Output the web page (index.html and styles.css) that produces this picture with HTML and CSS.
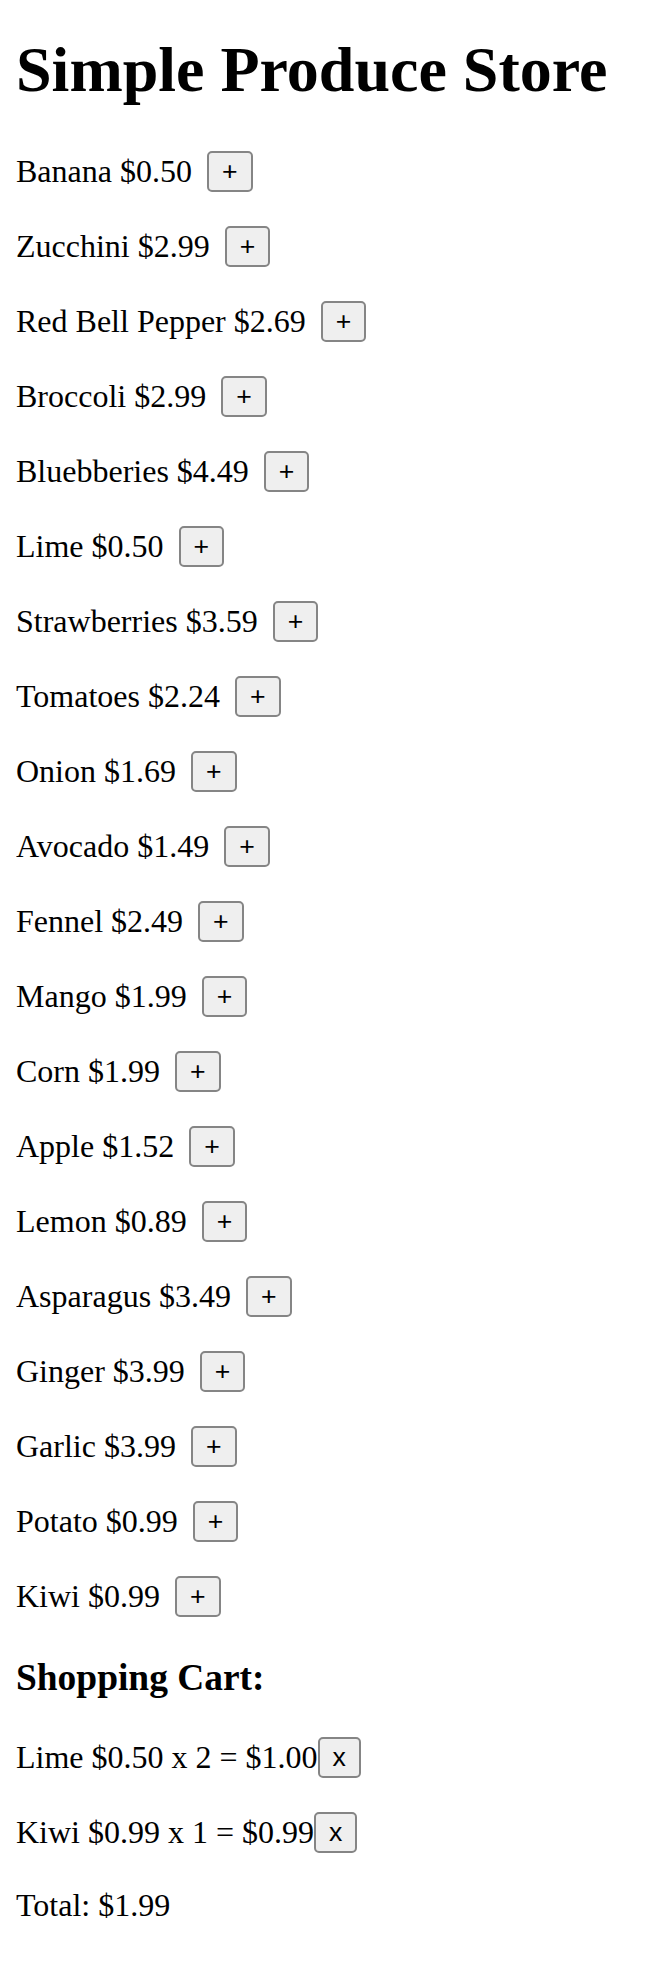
FILE: index.html
```html
<!DOCTYPE html>
<html lang="en">
<head>
<meta charset="utf-8">
<title>Simple Produce Store</title>
<link rel="stylesheet" href="styles.css">
</head>
<body>
<div class="app">
  <h1 class="title">Simple Produce Store</h1>
  <div class="products">
    <p class="row"><span>Banana $0.50</span><button class="btn add">+</button></p>
    <p class="row"><span>Zucchini $2.99</span><button class="btn add">+</button></p>
    <p class="row"><span>Red Bell Pepper $2.69</span><button class="btn add">+</button></p>
    <p class="row"><span>Broccoli $2.99</span><button class="btn add">+</button></p>
    <p class="row"><span>Bluebberies $4.49</span><button class="btn add">+</button></p>
    <p class="row"><span>Lime $0.50</span><button class="btn add">+</button></p>
    <p class="row"><span>Strawberries $3.59</span><button class="btn add">+</button></p>
    <p class="row"><span>Tomatoes $2.24</span><button class="btn add">+</button></p>
    <p class="row"><span>Onion $1.69</span><button class="btn add">+</button></p>
    <p class="row"><span>Avocado $1.49</span><button class="btn add">+</button></p>
    <p class="row"><span>Fennel $2.49</span><button class="btn add">+</button></p>
    <p class="row"><span>Mango $1.99</span><button class="btn add">+</button></p>
    <p class="row"><span>Corn $1.99</span><button class="btn add">+</button></p>
    <p class="row"><span>Apple $1.52</span><button class="btn add">+</button></p>
    <p class="row"><span>Lemon $0.89</span><button class="btn add">+</button></p>
    <p class="row"><span>Asparagus $3.49</span><button class="btn add">+</button></p>
    <p class="row"><span>Ginger $3.99</span><button class="btn add">+</button></p>
    <p class="row"><span>Garlic $3.99</span><button class="btn add">+</button></p>
    <p class="row"><span>Potato $0.99</span><button class="btn add">+</button></p>
    <p class="row"><span>Kiwi $0.99</span><button class="btn add">+</button></p>
  </div>
  <h3 class="cart-title">Shopping Cart:</h3>
  <div class="cart">
    <p class="row"><span>Lime $0.50 x 2 = $1.00</span><button class="btn remove">x</button></p>
    <p class="row"><span>Kiwi $0.99 x 1 = $0.99</span><button class="btn remove">x</button></p>
  </div>
  <p class="total">Total: $1.99</p>
</div>
</body>
</html>
```
FILE: styles.css
```css
html, body {
  background: #ffffff;
}

body {
  margin: 0 16px;
  font-family: "Liberation Serif", "Times New Roman", serif;
  font-size: 32px;
  color: #000000;
}

.app {
  padding-top: 33px;
}

.title {
  font-size: 64px;
  font-weight: bold;
  line-height: 74px;
  margin: 0 0 44px;
}

.row {
  display: flex;
  align-items: center;
  margin: 34px 0;
}

.products .row:first-child {
  margin-top: 0;
}

.btn {
  box-sizing: border-box;
  height: 41px;
  font-family: "Liberation Sans", Arial, sans-serif;
  font-size: 26.67px;
  line-height: 31px;
  padding: 0 13px;
  border: 2px solid #858585;
  border-radius: 5px;
  background: #efefef;
  color: #000000;
  margin: 0;
}

.add {
  margin-left: 15px;
}

.remove {
  margin-left: 0;
}

.cart-title {
  font-size: 37.44px;
  font-weight: bold;
  line-height: 43px;
  margin: 39px 0 38px;
}

.cart .row:first-child {
  margin-top: 0;
}

.total {
  margin: 34px 0;
}
```
